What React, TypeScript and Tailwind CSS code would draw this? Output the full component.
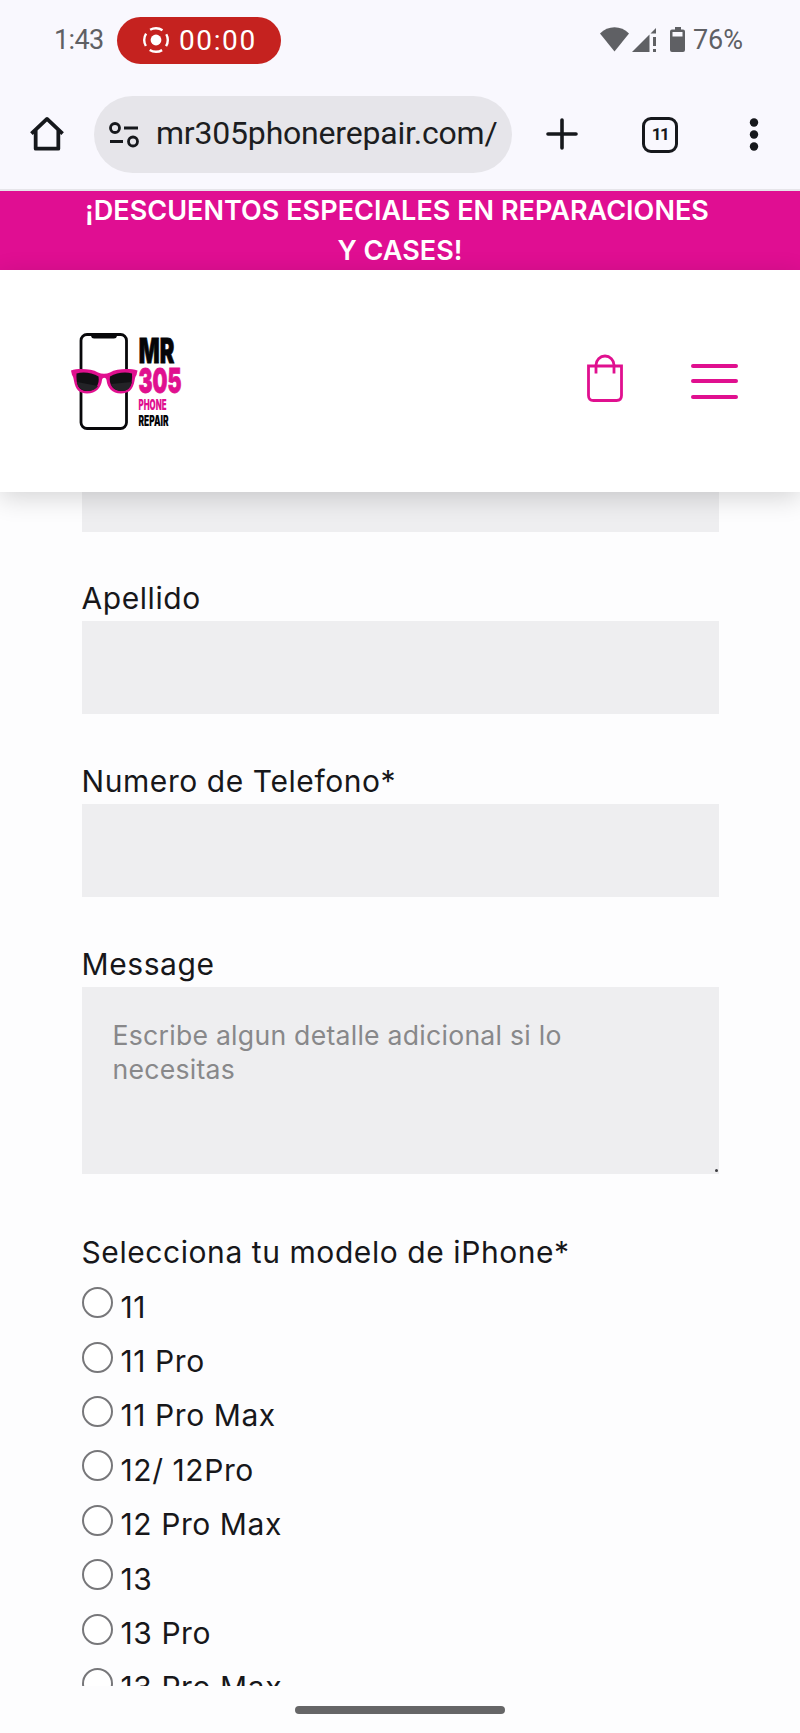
import { ReactNode } from 'react';

const models = ['11', '11 Pro', '11 Pro Max', '12/ 12Pro', '12 Pro Max', '13', '13 Pro', '13 Pro Max'];

function StatusBar() {
    return (
        <div className="flex h-20 items-center justify-between pl-[54px] pr-[57px] font-['Roboto',sans-serif] text-[27px] text-[#5f6064]">
            <div className="flex items-center">
                <span className="mt-px w-[63px] whitespace-nowrap tracking-[-0.6px]">1:43</span>
                <div className="flex h-[47px] w-[164px] items-center rounded-full bg-[#c5221f] pl-[25px] text-white">
                    <svg width="28" height="28" viewBox="0 0 28 28" fill="none">
                        <circle cx="14" cy="14" r="5.4" fill="white" />
                        <circle
                            cx="14"
                            cy="14"
                            r="11.8"
                            stroke="white"
                            strokeWidth="2.4"
                            strokeDasharray="13 5.535"
                            strokeDashoffset="6.5"
                        />
                    </svg>
                    <span className="mt-px ml-[9px] text-[28px] tracking-[1.6px]">00:00</span>
                </div>
            </div>

            <div className="flex items-center">
                <svg width="86" height="26" viewBox="0 0 86 26" fill="#5f6064">
                    {/* Wifi */}
                    <path d="M0 6.5C8-1.8 21-1.8 29 6.5L14.5 24.5Z" />
                    {/* Signal */}
                    <path d="M32 25L49.5 7.5V25Z" />
                    <path d="M50.5 6.5L56 1V6.5Z" />
                    <path d="M53 10h3v9h-3zM53 22h3v3h-3z" />
                    {/* Battery */}
                    <path
                        fillRule="evenodd"
                        d="M75 0h6v2.500h2a2 2 0 0 1 2 2V23a2 2 0 0 1-2 2H72a2 2 0 0 1-2-2V4.500a2 2 0 0 1 2-2h3zM72.500 5v4.500h10V5z"
                    />
                </svg>
                <span className="mt-px ml-[7px]">76%</span>
            </div>
        </div>
    );
}

function BrowserBar() {
    return (
        <div className="flex h-[111px] items-start border-b-2 border-[#e6e5ea] pt-4">
            <svg className="mt-[20px] ml-[30px]" width="34" height="36" viewBox="0 0 36 38" fill="none" stroke="#16181c" strokeWidth="4">
                <path d="M1.500 18.500L18 3L34.500 18.500" strokeLinejoin="round" />
                <path d="M6 15V34.500H30V15" strokeLinejoin="round" />
            </svg>
            <div className="ml-[30px] flex h-[77px] w-[418px] items-center rounded-full bg-[#e6e5ea] pl-[15px]">
                <svg width="30" height="26" viewBox="0 0 30 26" fill="none" stroke="#16181c" strokeWidth="2.8">
                    <circle cx="6" cy="6" r="4.500" />
                    <path d="M15 6H29M1 19.500H14" />
                    <circle cx="24" cy="19.500" r="4.500" />
                </svg>
                <span className="mb-[3px] ml-[17px] whitespace-nowrap font-['Roboto',sans-serif] text-[32px] tracking-[-0.2px] text-[#1c1d21]">
                    mr305phonerepair.com/
                </span>
            </div>
            <svg className="mt-[22px] ml-[34px]" width="32" height="32" viewBox="0 0 32 32" stroke="#16181c" strokeWidth="3.600" strokeLinecap="round">
                <path d="M16 2V30M2 16H30" />
            </svg>
            <div className="mt-[21px] ml-[64px] flex size-[36px] items-center justify-center rounded-[9px] border-[3.5px] border-[#16181c] font-['Roboto',sans-serif] text-[17px] font-bold tracking-[-1.5px] text-[#16181c]">
                11
            </div>
            <svg className="mt-[22px] ml-[71px]" width="10" height="34" viewBox="0 0 10 34" fill="#16181c">
                <circle cx="5" cy="4.500" r="4.200" />
                <circle cx="5" cy="16.500" r="4.200" />
                <circle cx="5" cy="28.500" r="4.200" />
            </svg>
        </div>
    );
}

function Logo() {
    return (
        <svg className="overflow-visible" width="112" height="100" viewBox="70 331 112 100" fontFamily="Inter, sans-serif" fontWeight="900">
            <rect x="81" y="334.500" width="45.500" height="94" rx="6" fill="white" stroke="#08080a" strokeWidth="2.800" />
            <path d="M91 334H117V336Q116.500 338.500 114 338.500H94Q91.500 338.500 91 336Z" fill="#08080a" />
            {/* Sunglasses */}
            <path
                d="M71 370.500C78 368.300 91 368.500 98 372.500C102 374.300 106 374.300 110 372.500C117 368.500 130 368.300 137.500 370.500L136.500 375C135.500 376 135 378 134.500 381C133 390 128 393.500 121 393.500C112 393.500 107.500 388 106.500 380C106 377 102.500 377 102 380C101 388 96 393.500 87 393.500C80 393.500 75.500 390 74 381C73.500 378 73 376 72 375Z"
                fill="#e0108f"
            />
            <path d="M76.500 373.500C83 371.500 92 372.500 98.500 376.500C100 385 95 391 87 391C78 391 76 384 76.500 373.500Z" fill="#111114" />
            <path d="M132 373.500C125.500 371.500 116.500 372.500 110 376.500C108.500 385 113.500 391 121.500 391C130.500 391 132.500 384 132 373.500Z" fill="#111114" />
            <path d="M77 382L98 386Q95 391 87 391Q78 390 77 382ZM111 384L132 382Q130 391 121.500 391Q113 390 111 384Z" fill="#232327" />
            <text x="138.800" y="363" fontSize="34" textLength="35.500" lengthAdjust="spacingAndGlyphs" fill="#050507" stroke="#050507" strokeWidth="0.800">MR</text>
            <text x="138.500" y="392.700" fontSize="34" textLength="43" lengthAdjust="spacingAndGlyphs" fill="#e0108f" stroke="#e0108f" strokeWidth="0.800">305</text>
            <text x="138.500" y="410" fontSize="14" textLength="28" lengthAdjust="spacingAndGlyphs" fill="#e0108f">PHONE</text>
            <text x="138.500" y="426" fontSize="14" textLength="30" lengthAdjust="spacingAndGlyphs" fill="#050507">REPAIR</text>
        </svg>
    );
}

function SiteHeader() {
    return (
        <header className="relative z-10 flex h-[222px] items-center justify-between bg-white pl-[70px] pr-[62px] shadow-[0_6px_24px_rgba(0,0,0,0.16)]">
            <Logo />
            <div className="flex items-center gap-[68px]">
                <svg className="mb-[7px]" width="36" height="48" viewBox="0 0 36 48" fill="none" stroke="#e0108f" strokeWidth="2.800">
                    <path d="M1.500 12H34.500V41.500Q34.500 46.500 29.500 46.500H6.500Q1.500 46.500 1.500 41.500Z" />
                    <path d="M9 19.500V11A9 9 0 0 1 27 11V19.500" />
                </svg>
                <div className="flex flex-col gap-[11.5px]">
                    <span className="h-[4px] w-[47px] rounded-full bg-[#e0108f]" />
                    <span className="h-[4px] w-[47px] rounded-full bg-[#e0108f]" />
                    <span className="h-[4px] w-[47px] rounded-full bg-[#e0108f]" />
                </div>
            </div>
        </header>
    );
}

function Field({ label, children }: { label: string; children: ReactNode }) {
    return (
        <div>
            <div className="mb-[3px] h-10 whitespace-nowrap leading-10">{label}</div>
            {children}
        </div>
    );
}

export default function App() {
    return (
        <div className="flex h-[1733px] w-[800px] flex-col overflow-hidden bg-[#fdfdfe] font-['Inter',sans-serif]">
            <div className="bg-[#f9f8fe]">
                <StatusBar />
                <BrowserBar />
            </div>

            <div className="h-[79px] bg-[#e00e92] text-center text-[27px] font-semibold leading-[40px] tracking-[0.03px] text-white">
                <div className="h-10 pr-[6px]">¡DESCUENTOS ESPECIALES EN REPARACIONES</div>
                <div>Y CASES!</div>
            </div>

            <SiteHeader />

            {/* Form */}
            <main className="h-[1194px] overflow-hidden pl-[81.5px] pr-[81px] text-[30px] tracking-[0.57px] text-[#17171a]">
                <div className="mb-[46px] h-10 bg-[#eeeef0]" />
                <Field label="Apellido">
                    <div className="mb-[47px] h-[93px] bg-[#eeeef0]" />
                </Field>
                <Field label="Numero de Telefono*">
                    <div className="mb-[47px] h-[93px] bg-[#eeeef0]" />
                </Field>
                <Field label="Message">
                    <div className="relative mb-[58px] h-[187px] bg-[#eeeef0] px-[31px] pt-[32px] text-[26.6px] leading-[33.5px] tracking-[0.26px] text-[#88888a]">
                        Escribe algun detalle adicional si lo
                        <br />
                        necesitas
                        <span className="absolute right-[1px] bottom-[2px] size-[3px] rounded-full bg-[#3c3c40]" />
                    </div>
                </Field>
                <div className="mb-[8px] h-10 whitespace-nowrap leading-10">Selecciona tu modelo de iPhone*</div>
                {models.map((model) => (
                    <label key={model} className="flex h-[54.4px] items-center">
                        <span className="mb-[9px] size-[31px] rounded-full border-2 border-[#77777a] bg-white" />
                        <span className="ml-2">{model}</span>
                    </label>
                ))}
            </main>

            {/* Gesture bar */}
            <div className="flex h-[47px] justify-center pt-[20px]">
                <div className="h-[8px] w-[210px] rounded-full bg-[#666667]" />
            </div>
        </div>
    );
}
